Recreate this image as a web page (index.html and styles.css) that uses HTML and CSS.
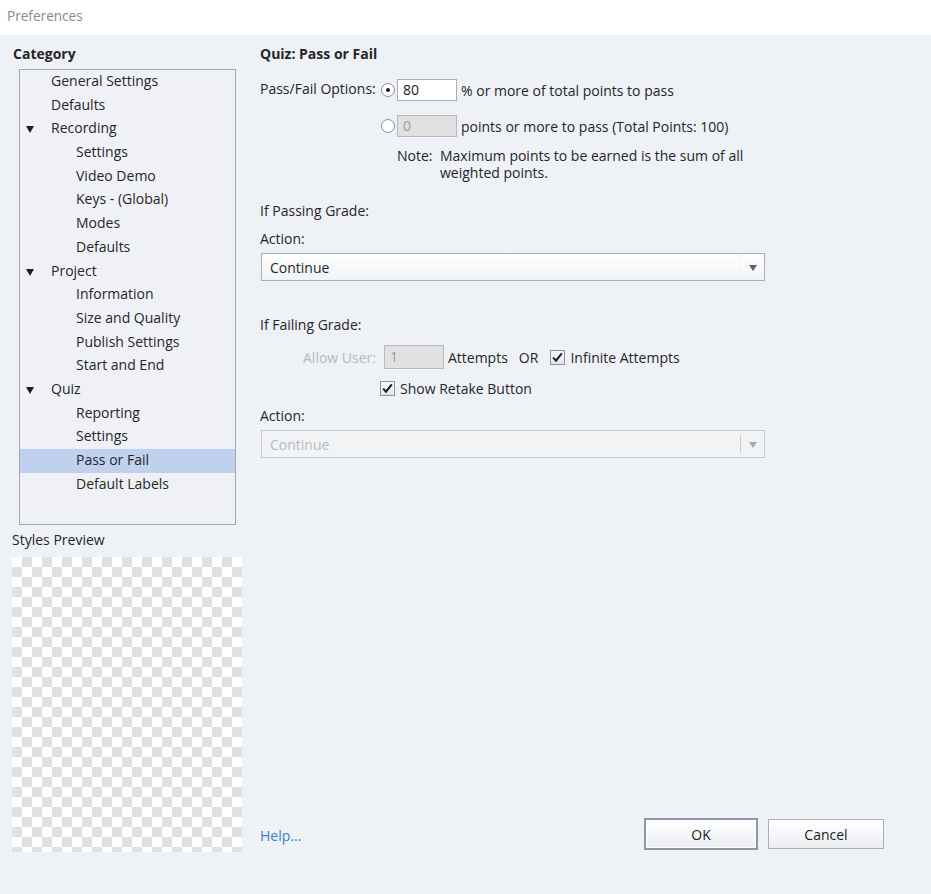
FILE: index.html
```html
<!DOCTYPE html>
<html>
<head>
<meta charset="utf-8">
<title>Preferences</title>
<link rel="stylesheet" href="styles.css">
</head>
<body>
<div class="titlebar">Preferences</div>
<div class="main">
  <aside class="left">
    <div class="cat-label">Category</div>
    <ul class="tree">
      <li class="l1">General Settings</li>
      <li class="l1">Defaults</li>
      <li class="l1 open"><span class="tri"></span>Recording</li>
      <li class="l2">Settings</li>
      <li class="l2">Video Demo</li>
      <li class="l2">Keys - (Global)</li>
      <li class="l2">Modes</li>
      <li class="l2">Defaults</li>
      <li class="l1 open"><span class="tri"></span>Project</li>
      <li class="l2">Information</li>
      <li class="l2">Size and Quality</li>
      <li class="l2">Publish Settings</li>
      <li class="l2">Start and End</li>
      <li class="l1 open"><span class="tri"></span>Quiz</li>
      <li class="l2">Reporting</li>
      <li class="l2">Settings</li>
      <li class="l2 sel">Pass or Fail</li>
      <li class="l2">Default Labels</li>
    </ul>
    <div class="preview-label">Styles Preview</div>
    <div class="preview"></div>
  </aside>
  <section class="right">
    <h1 class="heading">Quiz: Pass or Fail</h1>
    <div class="options">
      <div class="opt-label">Pass/Fail Options:</div>
      <span class="radio on"></span>
      <div class="field">80</div>
      <div class="opt-text">% or more of total points to pass</div>

      <span class="radio r2"></span>
      <div class="field disabled r2">0</div>
      <div class="opt-text r2">points or more to pass (Total Points: 100)</div>

      <div class="note">
        <span class="note-key">Note:</span>
        <span class="note-text">Maximum points to be earned is the sum of all weighted points.</span>
      </div>
    </div>

    <div class="section-label pass">If Passing Grade:</div>
    <div class="action-label">Action:</div>
    <div class="select">
      <span class="select-value">Continue</span>
      <span class="select-btn"><span class="arrow"></span></span>
    </div>

    <div class="section-label fail">If Failing Grade:</div>
    <div class="attempts">
      <span class="muted">Allow User:</span>
      <span class="field small disabled">1</span>
      <span class="attempts-word">Attempts</span>
      <span class="or">OR</span>
      <span class="check"><svg viewBox="0 0 15 15" width="15" height="15"><path d="M3.2 7.6 L6 10.6 L11.8 3.4" fill="none" stroke="#1d1d1d" stroke-width="2"/></svg></span>
      <span>Infinite Attempts</span>
    </div>
    <div class="retake">
      <span class="check"><svg viewBox="0 0 15 15" width="15" height="15"><path d="M3.2 7.6 L6 10.6 L11.8 3.4" fill="none" stroke="#1d1d1d" stroke-width="2"/></svg></span>
      <span>Show Retake Button</span>
    </div>
    <div class="action-label second">Action:</div>
    <div class="select disabled">
      <span class="select-value">Continue</span>
      <span class="select-btn sep"><span class="arrow"></span></span>
    </div>

    <div class="footer">
      <a class="help">Help...</a>
      <button class="btn default">OK</button>
      <button class="btn">Cancel</button>
    </div>
  </section>
</div>
</body>
</html>
```
FILE: styles.css
```css
* { box-sizing: border-box; }
html, body { margin: 0; padding: 0; }
body {
  width: 931px;
  height: 894px;
  overflow: hidden;
  font-family: "Open Sans", "Noto Sans", sans-serif;
  font-size: 14px;
  color: #262626;
  background: #eef1f6;
}
.titlebar {
  height: 35px;
  background: #ffffff;
  color: #8a8a8a;
  font-size: 13.6px;
  line-height: 32px;
  padding-left: 7px;
}
.main {
  display: flex;
  height: 859px;
}
.left {
  width: 250px;
  padding: 10px 0 0 12px;
  display: flex;
  flex-direction: column;
}
.cat-label {
  font-weight: bold;
  font-size: 14px;
  line-height: 18px;
  padding-left: 1px;
}
.tree {
  list-style: none;
  margin: 6px 0 0 7px;
  padding: 0;
  width: 217px;
  height: 456px;
  border: 1px solid #a3a7b2;
  background: #eff1f6;
}
.tree li {
  height: 23.7px;
  line-height: 21px;
  white-space: nowrap;
  position: relative;
}
.tree .l1 { padding-left: 31px; }
.tree .l2 { padding-left: 56px; }
.tree .sel { background: #bfd1ef; }
.tri {
  position: absolute;
  left: 6px;
  top: 9px;
  width: 0;
  height: 0;
  border-left: 4.5px solid transparent;
  border-right: 4.5px solid transparent;
  border-top: 7px solid #1e1e1e;
}
.preview-label {
  margin-top: 6px;
  line-height: 18px;
}
.preview {
  margin-top: 8px;
  width: 230px;
  height: 295px;
  background: repeating-conic-gradient(#e0e0e0 0 25%, #ffffff 0 50%) 0 0 / 20px 20px;
}
.right {
  flex: 1;
  padding: 10px 47px 44px 10px;
  display: flex;
  flex-direction: column;
}
.heading {
  margin: 0;
  font-size: 14px;
  font-weight: bold;
  line-height: 18px;
}
.options {
  margin-top: 16px;
  display: grid;
  grid-template-columns: 121px 16px 60px auto;
  grid-auto-rows: auto;
  row-gap: 14px;
  align-items: center;
}
.opt-label { align-self: start; line-height: 18px; padding-top: 1px; }
.opt-text { padding-left: 4px; }
.radio {
  width: 14px;
  height: 14px;
  border-radius: 50%;
  border: 1px solid #8d929c;
  background: radial-gradient(circle, #ffffff 50%, #eceef2 100%);
  position: relative;
}
.radio.on::after {
  content: "";
  position: absolute;
  left: 4px;
  top: 4px;
  width: 4px;
  height: 4px;
  border-radius: 50%;
  background: #1e1e1e;
}
.r2 { grid-row: 2; }
.radio.r2 { grid-column: 2; }
.field.r2 { grid-column: 3; }
.opt-text.r2 { grid-column: 4; }
.field {
  height: 22px;
  border: 1px solid #a9adb6;
  background: #ffffff;
  padding-left: 5px;
  line-height: 20px;
  color: #1a1a1a;
}
.field.disabled {
  background: #e1e1e1;
  color: #9a9a9a;
  border-color: #b6b9bf;
}
.note {
  grid-row: 3;
  grid-column: 3 / span 2;
  display: flex;
  margin-top: -4px;
  line-height: 17px;
  width: 362px;
}
.note-key { width: 43px; flex: none; }
.section-label { line-height: 18px; }
.section-label.pass { margin-top: 21px; }
.action-label { margin-top: 10px; line-height: 18px; }
.select {
  margin-top: 5px;
  width: 504px;
  height: 28px;
  margin-left: 1px;
  border: 1px solid #a9adb6;
  background: linear-gradient(#ffffff, #f2f3f5);
  display: flex;
  align-items: center;
}
.select-value { flex: 1; padding-left: 8px; }
.select-btn {
  width: 24px;
  height: 100%;
  display: flex;
  align-items: center;
  justify-content: center;
  border-left: 1px solid #f2f2f4;
}
.arrow {
  width: 0;
  height: 0;
  border-left: 4px solid transparent;
  border-right: 4px solid transparent;
  border-top: 6px solid #5c6068;
  margin-top: 1px;
}
.select.disabled {
  border-color: #c6c9cf;
  background: #f2f3f5;
  color: #b6bac2;
}
.select.disabled .select-btn.sep { border-left: 1px solid #c9ccd2; height: 18px; }
.select.disabled .arrow { border-top-color: #a5a9b0; }
.section-label.fail { margin-top: 35px; }
.attempts {
  margin-top: 11px;
  display: flex;
  align-items: center;
  padding-left: 43px;
  height: 24px;
}
.muted { color: #b6bac2; }
.field.small {
  width: 60px;
  height: 24px;
  margin-left: 8px;
  line-height: 22px;
}
.attempts-word { margin-left: 4px; }
.or { margin-left: 11px; }
.check {
  width: 15px;
  height: 15px;
  border: 1px solid #8d929c;
  background: linear-gradient(#f7f8fa, #e4e6ea);
  display: inline-flex;
  align-items: center;
  justify-content: center;
  margin-right: 5px;
}
.check svg { display: block; flex: none; margin: -1px; }
.attempts .check { margin-left: 12px; }
.retake {
  margin-top: 10px;
  padding-left: 120px;
  display: flex;
  align-items: center;
  height: 18px;
}
.action-label.second { margin-top: 10px; }
.footer {
  margin-top: auto;
  display: flex;
  align-items: center;
}
.help {
  color: #3b7fd0;
  margin-right: auto;
  padding-top: 3px;
}
.btn {
  font-family: inherit;
  font-size: 14px;
  color: #1e1e1e;
  height: 30px;
  width: 116px;
  border: 1px solid #a8adba;
  background: linear-gradient(#ffffff, #eceef2);
  padding: 0;
}
.btn.default {
  width: 114px;
  height: 32px;
  border: 2px solid #8f96a6;
  box-shadow: inset 0 0 0 1px #ffffff;
  margin-right: 10px;
}
```
